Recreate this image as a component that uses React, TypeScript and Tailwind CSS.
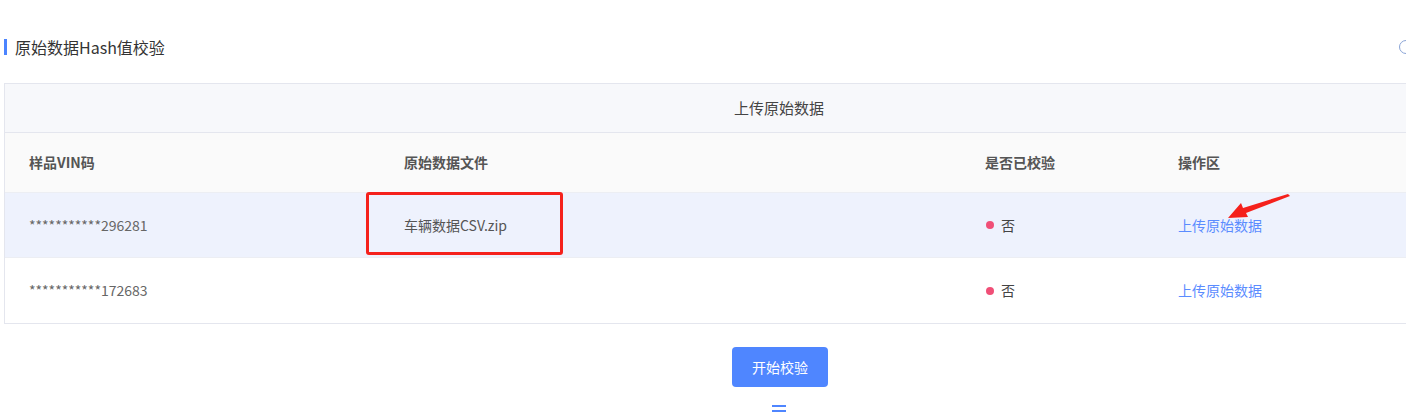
import React from 'react'

const rows = [
  { vin: '***********296281', file: '车辆数据CSV.zip', checked: '否', highlight: true },
  { vin: '***********172683', file: '', checked: '否', highlight: false },
]

export default function App() {
  return (
    <div
      className="w-[1406px] h-[414px] overflow-hidden bg-white text-[14px] text-[#555]"
      style={{ fontFamily: '"Microsoft YaHei", "Noto Sans CJK SC", "Noto Sans", sans-serif' }}
    >
      {/* Title */}
      <div className="flex items-center h-[16px] mt-[39px] pl-[4px] relative">
        <span className="w-[3px] h-[16px] bg-[#4b84ff]" />
        <span className="ml-[8px] text-[16px] text-[#333] leading-none">原始数据Hash值校验</span>
        <span className="absolute left-[1399px] top-[1px] w-[14px] h-[14px] rounded-full border border-[#8aa4d6]" />
      </div>

      <div className="ml-[4px] w-[1550px]">
        {/* Table */}
        <div className="mt-[28px] border border-[#e4e6ee]">
          <div className="h-[49px] flex items-center justify-center bg-[#f7f8fb] border-b border-[#e4e6ee] text-[#444] text-[15px]">
            上传原始数据
          </div>
          <div className="h-[60px] flex items-center bg-[#fafafa] border-b border-[#eceef3] font-bold text-[#555]">
            <div className="w-[375px] pl-[24px]">样品VIN码</div>
            <div className="w-[581px] pl-[24px]">原始数据文件</div>
            <div className="w-[193px] pl-[24px]">是否已校验</div>
            <div className="flex-1 pl-[24px]">操作区</div>
          </div>
          {rows.map((r, i) => (
            <div
              key={r.vin}
              className={
                'h-[65px] flex items-center ' +
                (r.highlight ? 'bg-[#eef2fd] ' : 'bg-white ') +
                (i === 0 ? 'border-b border-[#eceef3]' : '')
              }
            >
              <div className="w-[375px] pl-[24px] text-[#666]">{r.vin}</div>
              <div className="w-[581px] pl-[24px] relative text-[#555]">
                {r.file}
                {r.file && (
                  <span className="absolute left-[-14px] top-[-23px] w-[197px] h-[63px] border-[3px] border-[#f5211c] rounded-[3px]" />
                )}
              </div>
              <div className="w-[193px] pl-[25px] flex items-center text-[#444]">
                <span className="w-[8px] h-[8px] rounded-full bg-[#f04f77] mr-[7px]" />
                否
              </div>
              <div className="flex-1 pl-[24px] text-[#5b8cff] relative">
                上传原始数据
                {r.highlight && (
                  <svg className="absolute left-[74px] top-[-22px]" width="66" height="32" viewBox="0 0 66 32">
                    <path d="M62 3 L18 20 L20 24 L0 25 L13 10 L15 15 L60 1 Z" fill="#f5211c" />
                  </svg>
                )}
              </div>
            </div>
          ))}
        </div>

        {/* Button */}
        <div className="flex justify-center mt-[23px] pl-[2px]">
          <button className="w-[96px] h-[40px] rounded-[4px] bg-[#4f86ff] text-white text-[14px]">开始校验</button>
        </div>
        <div className="flex flex-col items-center gap-[3px] mt-[18px]">
          <span className="w-[14px] h-[2px] bg-[#4f86ff]" />
          <span className="w-[14px] h-[2px] bg-[#4f86ff]" />
        </div>
      </div>
    </div>
  )
}
